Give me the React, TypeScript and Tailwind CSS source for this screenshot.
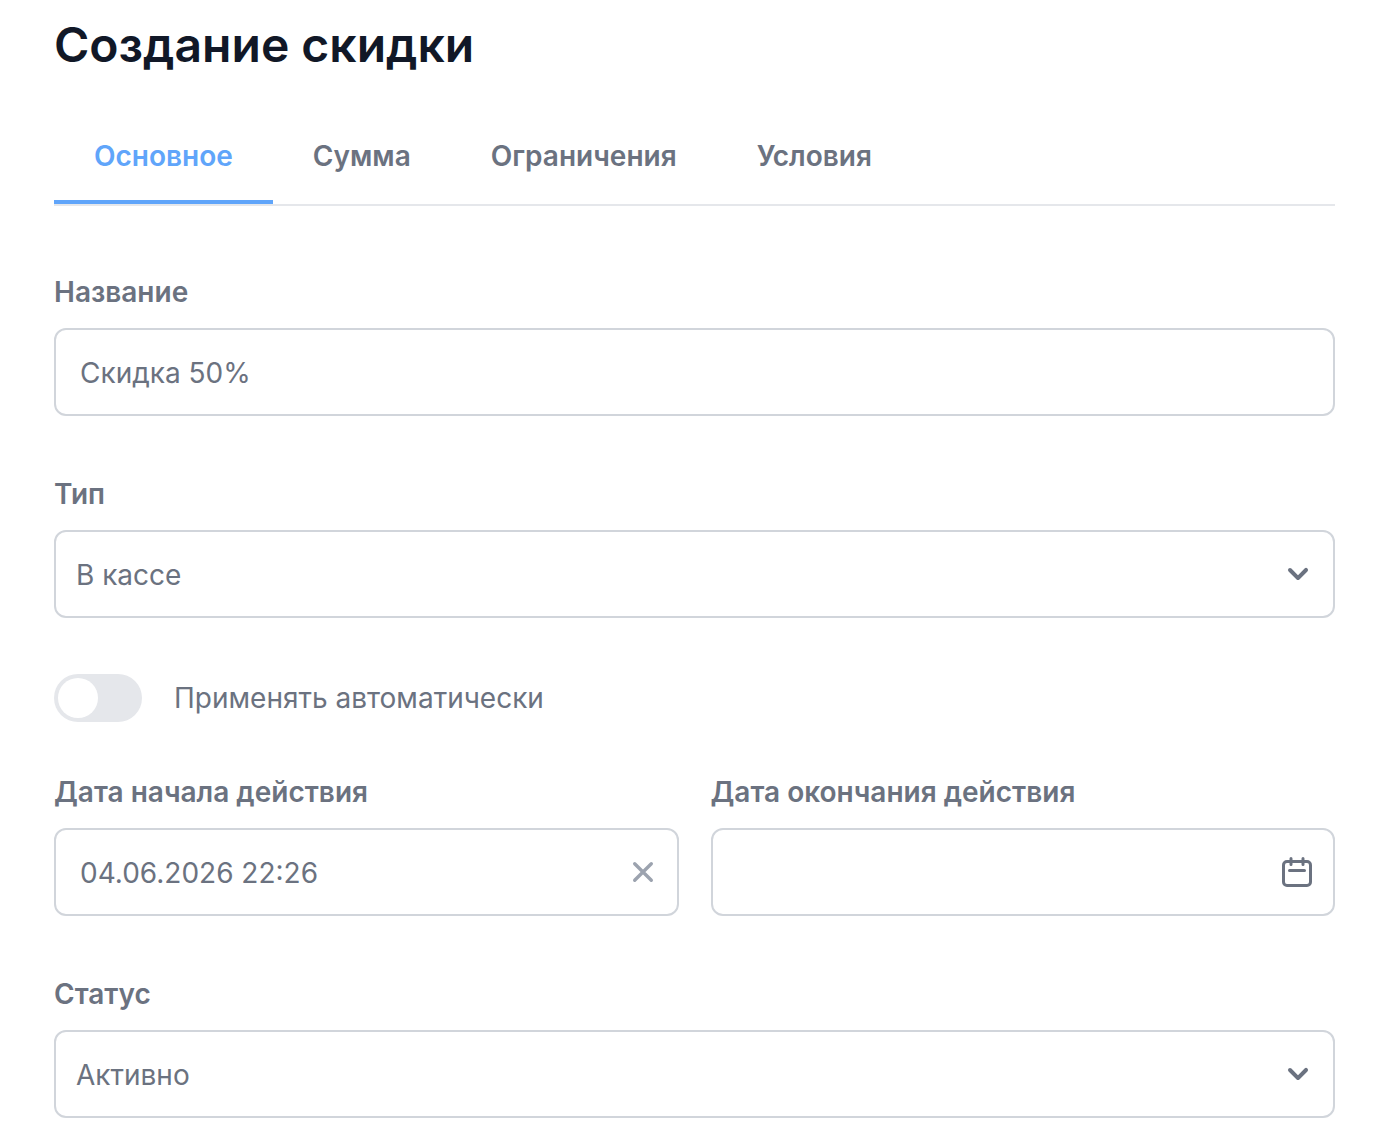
import React, { useState } from 'react';

const labelClass = 'mb-3.5 block text-[28px] leading-11 font-semibold text-[#6b7280]';
const boxClass =
  'block h-22 w-full rounded-xl border-2 border-[#d1d5db] bg-white pt-0.5 text-[28px] leading-10 text-[#6b7280] outline-none focus:border-[#60a5fa]';

const tabs = ['Основное', 'Сумма', 'Ограничения', 'Условия'];

function SelectField({ id, label, options }: { id: string; label: string; options: string[] }) {
  return (
    <div>
      <label htmlFor={id} className={labelClass}>{label}</label>
      <div className="relative">
        <select id={id} className={`${boxClass} appearance-none pr-20 pl-5`}>
          {options.map((o) => (
            <option key={o}>{o}</option>
          ))}
        </select>
        <svg
          className="pointer-events-none absolute top-6 right-[17px] size-10 text-[#6b7280]"
          viewBox="0 0 20 20"
          fill="currentColor"
          aria-hidden="true"
        >
          <path d="M5.293 7.293a1 1 0 0 1 1.414 0L10 10.586l3.293-3.293a1 1 0 1 1 1.414 1.414l-4 4a1 1 0 0 1-1.414 0l-4-4a1 1 0 0 1 0-1.414z" />
        </svg>
      </div>
    </div>
  );
}

export default function App() {
  const [tab, setTab] = useState(tabs[0]);
  const [auto, setAuto] = useState(false);
  const [start, setStart] = useState('04.06.2026 22:26');

  return (
    <main className="bg-white pt-[9px] pr-[45px] pb-4 pl-[54px] font-['Inter',sans-serif]">
      <h1 className="text-5xl leading-[72px] font-semibold text-[#111827]">Создание скидки</h1>

      <nav role="tablist" className="mt-[31px] flex border-b-2 border-[#e5e7eb]">
        {tabs.map((t) => (
          <button
            key={t}
            type="button"
            role="tab"
            aria-selected={t === tab}
            onClick={() => setTab(t)}
            className={`h-23 border-b-4 px-10 text-[28px] leading-10 font-semibold ${
              t === tab ? 'border-[#60a5fa] text-[#60a5fa]' : 'border-transparent text-[#6b7280]'
            }`}
          >
            {t}
          </button>
        ))}
      </nav>

      <form className="mt-16 flex flex-col">
        <div className="mb-14">
          <label htmlFor="name" className={labelClass}>Название</label>
          <input id="name" type="text" defaultValue="Скидка 50%" className={`${boxClass} px-6`} />
        </div>

        <SelectField id="type" label="Тип" options={['В кассе', 'Онлайн']} />

        <label className="mt-14 mb-12 flex items-center gap-8 self-start text-[28px] leading-12 text-[#6b7280]">
          <input
            type="checkbox"
            role="switch"
            checked={auto}
            onChange={(e) => setAuto(e.target.checked)}
            className="flex h-12 w-22 appearance-none items-center rounded-full bg-[#e5e7eb] px-1 before:size-10 before:rounded-full before:bg-white before:content-[''] checked:justify-end checked:bg-[#60a5fa]"
          />
          Применять автоматически
        </label>

        <div className="mb-14 grid grid-cols-2 gap-8">
          <div>
            <label htmlFor="start" className={labelClass}>Дата начала действия</label>
            <div className="relative">
              <input
                id="start"
                type="text"
                value={start}
                onChange={(e) => setStart(e.target.value)}
                className={`${boxClass} pr-18 pl-6`}
              />
              <button
                type="button"
                aria-label="Очистить"
                onClick={() => setStart('')}
                className="absolute top-6 right-4 flex size-10 items-center justify-center text-[#9ca3af]"
              >
                <svg className="size-8" viewBox="0 0 32 32" fill="none" stroke="currentColor" strokeWidth="3.4" strokeLinecap="round" aria-hidden="true">
                  <path d="M7.7 7.7l16.6 16.6M24.3 7.7L7.7 24.3" />
                </svg>
              </button>
            </div>
          </div>
          <div>
            <label htmlFor="end" className={labelClass}>Дата окончания действия</label>
            <div className="relative">
              <input id="end" type="text" className={`${boxClass} pr-18 pl-6`} />
              <button
                type="button"
                aria-label="Открыть календарь"
                className="absolute top-6 right-[18px] flex size-10 items-center justify-center text-[#6b7280]"
              >
                <svg className="size-8" viewBox="0 0 32 32" fill="none" stroke="currentColor" strokeWidth="3" strokeLinecap="round" strokeLinejoin="round" aria-hidden="true">
                  <rect x="2.5" y="5.5" width="27" height="24" rx="3.5" />
                  <path d="M10 2.5v6M22 2.5v6M8.5 14.5h15" />
                </svg>
              </button>
            </div>
          </div>
        </div>

        <SelectField id="status" label="Статус" options={['Активно', 'Неактивно']} />
      </form>
    </main>
  );
}
